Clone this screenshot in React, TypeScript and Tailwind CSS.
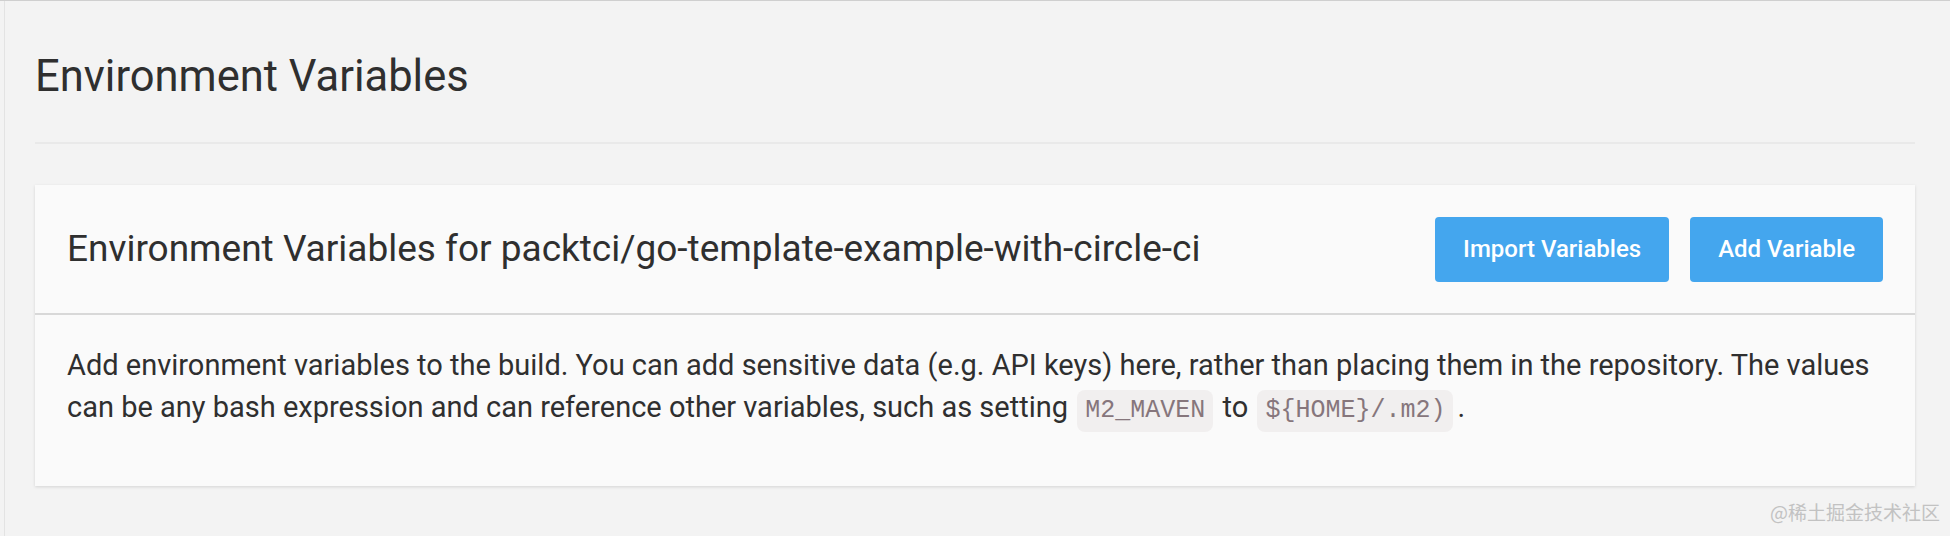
export default function App() {
  return (
    <div className="relative min-h-screen bg-[#f3f3f3] border-t border-[#cfcfcf] font-['Roboto',sans-serif] text-[#2f2f2f]">
      <div className="ml-[4px] min-h-[535px] border-l border-[#e3e3e3] pl-[30px] pr-[35px]">
        <h1 className="pt-[51px] pb-[40px] text-[43.5px] leading-[50px] font-normal border-b-2 border-[#e9e9e9]">
          Environment Variables
        </h1>

        <div className="mt-[41px] bg-[#fafafa] shadow-[0_1px_3px_rgba(0,0,0,0.13)]">
          <div className="flex h-[130px] items-center justify-between border-b-2 border-[#d8d8d8] px-8">
            <h2 className="text-[37px] leading-[44px] font-normal">
              Environment Variables for packtci/go-template-example-with-circle-ci
            </h2>
            <div className="flex gap-[21px]">
              <button className="h-[65px] rounded-[4px] bg-[#44a6ee] px-[28px] text-[24px] font-medium text-white">
                Import Variables
              </button>
              <button className="h-[65px] rounded-[4px] bg-[#44a6ee] px-[28px] text-[24px] font-medium text-white">
                Add Variable
              </button>
            </div>
          </div>

          <div className="px-8 pt-[29px] pb-[54px]">
            <p className="text-[29px] leading-[42px]">
              Add environment variables to the build. You can add sensitive data (e.g. API keys) here, rather than
              placing them in the repository. The values can be any bash expression and can reference other
              variables, such as setting{' '}
              <code className="mx-[2px] inline-block rounded-[8px] bg-[#f1efef] px-[8px] align-baseline font-['Liberation_Mono',monospace] text-[25px] leading-[42px] text-[#86767c]">
                M2_MAVEN
              </code>{' '}
              to{' '}
              <code className="ml-[2px] mr-[4px] inline-block rounded-[8px] bg-[#f1efef] px-[8px] align-baseline font-['Liberation_Mono',monospace] text-[25px] leading-[42px] text-[#86767c]">
                {'${HOME}/.m2)'}
              </code>
              .
            </p>
          </div>
        </div>
      </div>

      <div className="absolute bottom-[10px] right-[10px] font-['Noto_Sans_CJK_SC',sans-serif] text-[19px] text-[#c2c2c2]">
        @稀土掘金技术社区
      </div>
    </div>
  );
}
